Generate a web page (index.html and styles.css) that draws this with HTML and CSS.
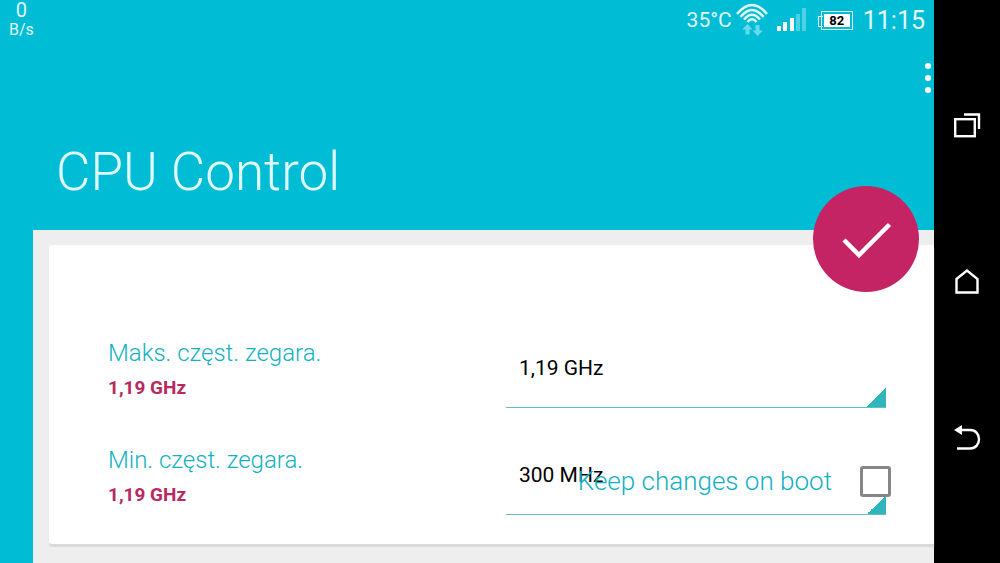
FILE: index.html
```html
<!DOCTYPE html>
<html lang="pl">
<head>
  <meta charset="UTF-8">
  <meta name="viewport" content="width=device-width, initial-scale=1.0">
  <title>CPU Control</title>
  <link rel="stylesheet" href="styles.css">
</head>
<body>

<div class="app">
  <header class="header">
    <div class="status-bar">
      <div class="net-speed">
        <span class="net-value">0</span>
        <span class="net-unit">B/s</span>
      </div>
      <div class="status-right">
        <span class="temp">35°C</span>
        <svg class="wifi" width="34" height="34" viewBox="0 0 34 34" fill="none" stroke="#e0f9fc" stroke-width="2.600">
          <path d="M2 11Q17 -7 32 11"/>
          <path d="M5.500 14Q17 0 28.500 14"/>
          <path d="M9 16.500Q17 7 25 16.500"/>
          <path d="M12.500 19Q17 13.500 21.500 19"/>
          <path d="M12.500 21l5 5.500h-3v5h-4v-5h-3.500z" fill="#66dbe9" stroke="none"/>
          <path d="M20.500 22h4v5.500h3.500l-5.500 5.500-5-5.500h3z" fill="#66dbe9" stroke="none"/>
        </svg>
        <svg class="signal" width="30" height="24" viewBox="0 0 30 24" fill="#fff">
          <rect x="0" y="18" width="4" height="5"/>
          <rect x="6" y="14" width="4" height="9"/>
          <rect x="13" y="10" width="4" height="13"/>
          <rect x="19" y="6" width="4" height="17" fill="#4dd2e3"/>
          <rect x="25" y="0" width="4" height="23" fill="#4dd2e3"/>
        </svg>
        <span class="battery">82</span>
        <span class="clock">11:15</span>
      </div>
    </div>
    <button class="menu-btn" type="button" aria-label="Menu">
      <svg width="6" height="32" viewBox="0 0 6 32" fill="#fff">
        <circle cx="3" cy="4" r="3"/>
        <circle cx="3" cy="16" r="3"/>
        <circle cx="3" cy="28" r="3"/>
      </svg>
    </button>
    <h1>CPU Control</h1>
    <button class="fab" type="button" aria-label="OK">
      <svg width="106" height="106" viewBox="0 0 106 106" fill="none" stroke="#fff" stroke-width="4.500">
        <path d="M31 54L46 69L76.500 38.500"/>
      </svg>
    </button>
  </header>

  <main class="content">
    <form class="card">
      <div class="row">
        <div class="info">
          <label for="maxFreq">Maks. częst. zegara.</label>
          <strong>1,19 GHz</strong>
        </div>
        <select id="maxFreq" name="maxFreq">
          <option>1,19 GHz</option>
        </select>
      </div>
      <div class="row">
        <div class="info">
          <label for="minFreq">Min. częst. zegara.</label>
          <strong>1,19 GHz</strong>
        </div>
        <select id="minFreq" name="minFreq">
          <option>300 MHz</option>
        </select>
      </div>
      <div class="boot">
        <label for="keepOnBoot">Keep changes on boot</label>
        <input type="checkbox" id="keepOnBoot" name="keepOnBoot">
      </div>
    </form>
  </main>
</div>

<nav class="nav-bar">
  <button type="button" aria-label="Recent apps">
    <svg width="28" height="28" viewBox="0 0 28 28" fill="none" stroke="#fff" stroke-width="2.400">
      <rect x="2.200" y="7.200" width="19.600" height="17"/>
      <path d="M11 2.500H26V17"/>
    </svg>
  </button>
  <button type="button" aria-label="Home">
    <svg width="28" height="28" viewBox="0 0 28 28" fill="none" stroke="#fff" stroke-width="2.400">
      <path d="M3.500 11L14 2.500L24.500 11V24.500H3.500Z"/>
    </svg>
  </button>
  <button type="button" aria-label="Back">
    <svg width="28" height="28" viewBox="0 0 28 28" fill="none" stroke="#fff" stroke-width="2.400">
      <path d="M7 6H17C29 6 29 24.500 17 24.500H4"/>
      <path d="M1 6L9 1V11Z" fill="#fff" stroke="none"/>
    </svg>
  </button>
</nav>

</body>
</html>
```
FILE: styles.css
```css
* {
  box-sizing: border-box;
}
body {
  margin: 0;
  min-height: 100vh;
  display: flex;
  font-family: Roboto, sans-serif;
  background-color: #00bcd4;
}
button {
  padding: 0;
  border: none;
  background: none;
  cursor: pointer;
}
svg {
  display: block;
}

/* left part: header and content */
.app {
  flex: 1;
  min-width: 0;
  display: flex;
  flex-direction: column;
}
.header {
  position: relative;
  color: #e0f9fc;
}
.status-bar {
  display: flex;
  justify-content: space-between;
  align-items: flex-start;
  height: 40px;
  padding: 0 9px;
}
.net-speed {
  display: flex;
  flex-direction: column;
  align-items: center;
}
.net-value {
  font-size: 20px;
  line-height: 21px;
}
.net-unit {
  font-size: 16px;
  line-height: 18px;
}
.status-right {
  display: flex;
  align-items: center;
  height: 40px;
}
.temp {
  font-size: 21px;
  margin-right: 3px;
}
.wifi {
  margin-right: 8px;
}
.signal {
  margin-right: 14px;
}
.battery {
  position: relative;
  width: 32px;
  height: 19px;
  margin-right: 10px;
  border: 1px solid #e0f9fc;
  padding: 2px;
  font-size: 13px;
  line-height: 13px;
  font-weight: bold;
  text-align: center;
  color: #000;
  background: #fff content-box;
}
.battery::before {
  content: "";
  position: absolute;
  left: -4px;
  top: 4px;
  width: 4px;
  height: 9px;
  border: 1px solid #e0f9fc;
  border-right: none;
}
.clock {
  font-size: 25px;
}
.menu-btn {
  display: block;
  margin: 22px 3px 0 auto;
}
h1 {
  margin: 0;
  padding: 44px 0 24px 56px;
  font-size: 53px;
  line-height: 68px;
  font-weight: 300;
}
.fab {
  position: absolute;
  right: 15px;
  bottom: -62px;
  z-index: 1;
  width: 106px;
  height: 106px;
  border-radius: 50%;
  background-color: #c42463;
}

.content {
  flex: 1;
  margin-left: 33px;
  padding: 15px 0 18px 16px;
  background-color: #eee;
}
.card {
  position: relative;
  display: flex;
  flex-direction: column;
  gap: 27px;
  padding: 83px 48px 29px 59px;
  border-radius: 3px 0 0 3px;
  background-color: #fff;
  box-shadow: 0 3px 1px #dadada;
}
.row {
  display: grid;
  grid-template-columns: 1fr 1fr;
  gap: 18px;
  align-items: center;
}
.info {
  display: flex;
  flex-direction: column;
  padding-top: 4px;
}
.info label {
  font-size: 24px;
  line-height: 36px;
  font-weight: 300;
  color: #12b0c3;
}
.info strong {
  font-size: 19px;
  line-height: 34px;
  color: #b8295f;
}
select {
  appearance: none;
  width: 100%;
  height: 80px;
  padding: 0 13px;
  border: none;
  border-bottom: 1px solid #5fc0bd;
  border-radius: 0;
  font-family: inherit;
  font-size: 21px;
  color: #000;
  background: linear-gradient(to bottom right, transparent 50%, #30b5bd 50%) right bottom / 19px 19px no-repeat;
}

/* floats over the second row */
.boot {
  position: absolute;
  right: 43px;
  bottom: 46px;
  display: flex;
  align-items: center;
  gap: 28px;
}
.boot label {
  font-size: 26px;
  line-height: 34px;
  font-weight: 300;
  color: #12b0c3;
}
.boot input {
  appearance: none;
  width: 31px;
  height: 31px;
  margin: 0;
  border: 3px solid #868686;
  border-radius: 3px;
  background-color: #fff;
}
.boot input:checked {
  background-color: #30b5bd;
}

/* system buttons */
.nav-bar {
  width: 66px;
  display: flex;
  flex-direction: column;
  justify-content: center;
  align-items: center;
  gap: 128px;
  background-color: #000;
}
```
